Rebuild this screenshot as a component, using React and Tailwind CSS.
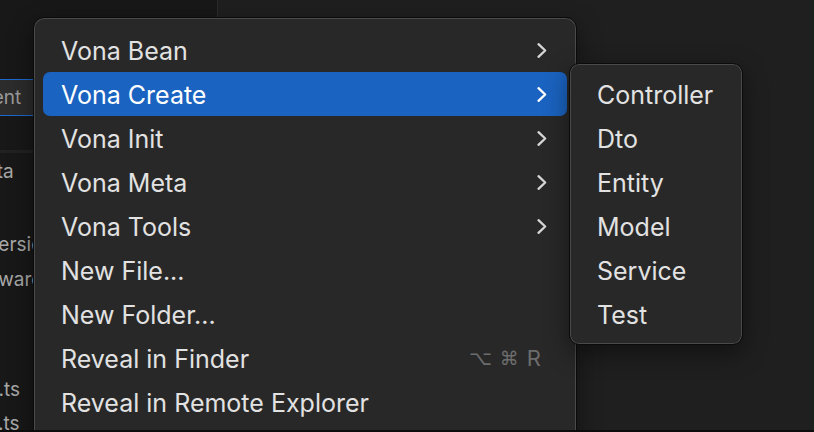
import React from 'react';

const mainItems = [
  { label: 'Vona Bean', sub: true },
  { label: 'Vona Create', sub: true, active: true },
  { label: 'Vona Init', sub: true },
  { label: 'Vona Meta', sub: true },
  { label: 'Vona Tools', sub: true },
  { label: 'New File...' },
  { label: 'New Folder...' },
  { label: 'Reveal in Finder', shortcut: true },
  { label: 'Reveal in Remote Explorer' },
];

const createItems = ['Controller', 'Dto', 'Entity', 'Model', 'Service', 'Test'];

function Chevron({ active }) {
  return (
    <svg width="12" height="17" viewBox="0 0 12 17" fill="none" className={active ? 'text-white' : 'text-[#d6d6d6]'}>
      <path d="M2.5 2.2 L9.2 8.5 L2.5 14.8" stroke="currentColor" strokeWidth="2.3" strokeLinecap="round" strokeLinejoin="round" />
    </svg>
  );
}

function MenuRow({ item }) {
  return (
    <div
      className={
        'flex h-[44px] items-center rounded-[7px] pl-[18px] pr-[19px] ' +
        (item.active ? 'bg-[#1a63c0] text-white' : 'text-[#e2e2e2]')
      }
    >
      <span className="flex-1 whitespace-nowrap pt-[2px]">{item.label}</span>
      {item.sub && <Chevron active={item.active} />}
      {item.shortcut && (
        <span className="flex items-center gap-[8px] pr-[7px] text-[22px] text-[#6c6c6c]">
          <span className="font-['DejaVu_Sans'] text-[20px]">⌥</span>
          <span className="font-['DejaVu_Sans'] text-[19px]">⌘</span>
          <span>R</span>
        </span>
      )}
    </div>
  );
}

export default function App() {
  return (
    <div className="flex h-[432px] w-[814px] flex-col overflow-hidden bg-[#1f1f1f] font-['Inter',sans-serif] text-[25px] leading-none">
      <div className="relative flex h-[430px] overflow-hidden">
        {/* sidebar behind the menu */}
        <div className="w-[218px] border-r border-[#2b2b2b] bg-[#181818] text-[19px] text-[#a8a8a8]">
          <div className="h-[79px]" />
          <div className="flex h-[37px] items-center border-y border-[#1c6ad0] bg-[#2c2c2c] whitespace-nowrap text-[#9a9a9a]">
            <span className="-ml-[37px]">Parent</span>
          </div>
          <div className="h-[34px]" />
          <div className="h-[3px] bg-[#222222]" />
          <div className="flex h-[36px] items-center whitespace-nowrap">
            <span className="-ml-[31px]">meta</span>
          </div>
          <div className="h-[37px]" />
          <div className="flex h-[36px] items-center whitespace-nowrap">
            <span className="-ml-[12px]">version</span>
          </div>
          <div className="flex h-[35px] items-center whitespace-nowrap">
            <span className="-ml-[27px]">forward</span>
          </div>
          <div className="h-[75px]" />
          <div className="flex h-[34px] items-center whitespace-nowrap">
            <span className="-ml-[50px]">index.ts</span>
          </div>
          <div className="flex h-[34px] items-center whitespace-nowrap">
            <span className="-ml-[52px]">types.ts</span>
          </div>
        </div>
        <div className="flex-1" />

        {/* context menu */}
        <div className="absolute left-[33px] top-[17px] h-[440px] w-[544px] rounded-[11px] border border-[#0b0b0b] bg-[#282828] px-[9px] pt-[10px] shadow-[inset_0_0_0_1px_#4a4a4a,0_8px_24px_rgba(0,0,0,0.45)]">
          {mainItems.map((item) => (
            <MenuRow key={item.label} item={item} />
          ))}
        </div>

        {/* submenu */}
        <div className="absolute left-[569px] top-[63px] h-[282px] w-[174px] rounded-[10px] border border-[#0b0b0b] bg-[#282828] pt-[9px] shadow-[inset_0_0_0_1px_#4a4a4a,0_8px_24px_rgba(0,0,0,0.45)]">
          {createItems.map((label) => (
            <div key={label} className="flex h-[44px] items-center pl-[27px] text-[#e2e2e2]">
              {label}
            </div>
          ))}
        </div>
      </div>
      <div className="h-[2px] bg-[#0d0d0d]" />
    </div>
  );
}
